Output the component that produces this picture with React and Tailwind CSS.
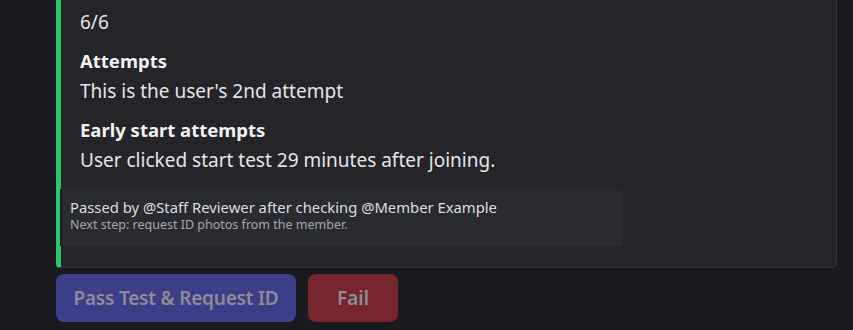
export default function App() {
  return (
    <div className="w-[853px] h-[330px] bg-[#1b1b1f] overflow-hidden" style={{ fontFamily: '"Noto Sans", "Open Sans", sans-serif' }}>
      <div className="pl-[56px] pr-[16px]">
        <div className="w-[781px] h-[268px] bg-[#242429] border-l-[5px] border-l-[#2bc76c] border-r border-b border-r-[#35353b] border-b-[#35353b] rounded-br-[5px] rounded-bl-[4px] flex flex-col">
          <div className="pl-[19px] pt-[9px] text-[#e4e4e8]">
            <div className="text-[19px] leading-[26px]">6/6</div>
            <div className="mt-[12px] text-[18.5px] leading-[28px] font-bold text-[#f1f1f4]">Attempts</div>
            <div className="text-[19px] leading-[32px]">This is the user's 2nd attempt</div>
            <div className="mt-[9px] text-[18.5px] leading-[28px] font-bold text-[#f1f1f4]">Early start attempts</div>
            <div className="text-[19px] leading-[32px]">User clicked start test 29 minutes after joining.</div>
          </div>
          <div className="mt-[13px] -ml-[1px] w-[562px] h-[57px] bg-[#2a2b30] border-l-2 border-l-[#1e1e22] pl-[8px] pt-[8px]">
            <div className="text-[14.8px] leading-[20px] text-[#dcdce0]">Passed by @Staff Reviewer after checking @Member Example</div>
            <div className="text-[12.5px] leading-[16px] text-[#a4a5ab]">Next step: request ID photos from the member.</div>
          </div>
        </div>
        <div className="mt-[6px] flex gap-[12px]">
          <div className="w-[240px] h-[48px] rounded-[8px] bg-[#3b3f87] flex items-center justify-center text-[19px] font-semibold text-[#8b8c98] tracking-[-0.2px]">Pass Test &amp; Request ID</div>
          <div className="w-[90px] h-[48px] rounded-[8px] bg-[#77262d] flex items-center justify-center text-[19px] font-semibold text-[#8b8c98]">Fail</div>
        </div>
      </div>
    </div>
  );
}
